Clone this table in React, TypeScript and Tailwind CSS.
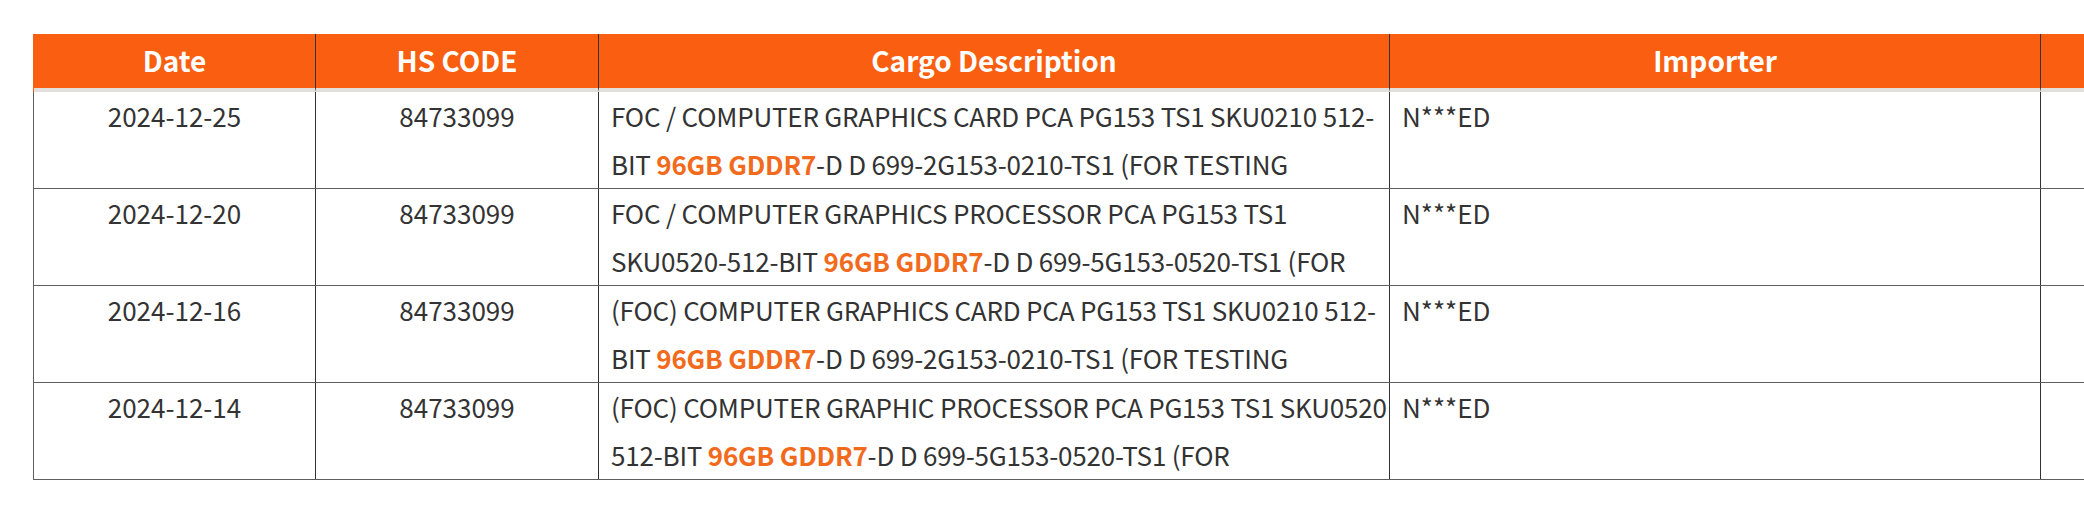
import React from "react";

type Row = {
  date: string;
  hs: string;
  lines: { pre: string; hl?: string; post?: string }[];
  importer: string;
};

const rows: Row[] = [
  {
    date: "2024-12-25",
    hs: "84733099",
    lines: [
      { pre: "FOC / COMPUTER GRAPHICS CARD PCA PG153 TS1 SKU0210 512-" },
      { pre: "BIT ", hl: "96GB GDDR7", post: "-D D 699-2G153-0210-TS1 (FOR TESTING" },
    ],
    importer: "N***ED",
  },
  {
    date: "2024-12-20",
    hs: "84733099",
    lines: [
      { pre: "FOC / COMPUTER GRAPHICS PROCESSOR PCA PG153 TS1" },
      { pre: "SKU0520-512-BIT ", hl: "96GB GDDR7", post: "-D D 699-5G153-0520-TS1 (FOR" },
    ],
    importer: "N***ED",
  },
  {
    date: "2024-12-16",
    hs: "84733099",
    lines: [
      { pre: "(FOC) COMPUTER GRAPHICS CARD PCA PG153 TS1 SKU0210 512-" },
      { pre: "BIT ", hl: "96GB GDDR7", post: "-D D 699-2G153-0210-TS1 (FOR TESTING" },
    ],
    importer: "N***ED",
  },
  {
    date: "2024-12-14",
    hs: "84733099",
    lines: [
      { pre: "(FOC) COMPUTER GRAPHIC PROCESSOR PCA PG153 TS1 SKU0520" },
      { pre: "512-BIT ", hl: "96GB GDDR7", post: "-D D 699-5G153-0520-TS1 (FOR" },
    ],
    importer: "N***ED",
  },
];

const font = { fontFamily: '"Noto Sans CJK SC", "Open Sans", sans-serif' };

export default function App() {
  return (
    <div className="w-[2084px] h-[512px] overflow-hidden bg-white" style={font}>
      <div className="pt-[34px] pl-[33px] w-max">
        {/* header */}
        <div className="flex h-[58px] text-white font-bold text-[28px] border-l border-l-[#fa5f11]">
          <HeadCell className="w-[282px]">Date</HeadCell>
          <HeadCell className="w-[283px]">HS CODE</HeadCell>
          <HeadCell className="w-[791px]">Cargo Description</HeadCell>
          <HeadCell className="w-[651px]">Importer</HeadCell>
          <HeadCell className="w-[300px]"></HeadCell>
        </div>

        {rows.map((r, i) => (
          <div
            key={i}
            className="flex h-[97px] border-l border-b border-[#5f5f5f] text-[#333] text-[26px] leading-[48px]"
          >
            <div className="w-[282px] border-r border-r-[#333] text-center">{r.date}</div>
            <div className="w-[283px] border-r border-r-[#333] text-center">{r.hs}</div>
            <div className="w-[791px] border-r border-r-[#333] pl-3 overflow-hidden tracking-[-0.2px]">
              {r.lines.map((l, j) => (
                <div key={j} className="whitespace-nowrap">
                  {l.pre}
                  {l.hl && <span className="font-bold text-[#f26a1c]">{l.hl}</span>}
                  {l.post}
                </div>
              ))}
            </div>
            <div className="w-[651px] border-r border-r-[#333] pl-3">{r.importer}</div>
            <div className="w-[300px]"></div>
          </div>
        ))}
      </div>
    </div>
  );
}

function HeadCell({ className, children }: { className: string; children?: React.ReactNode }) {
  return (
    <div
      className={`${className} flex items-center justify-center bg-[#fa5f11] border-r border-r-[#333] border-b-4 border-b-[#e2dedb] pb-[2px]`}
    >
      {children}
    </div>
  );
}
